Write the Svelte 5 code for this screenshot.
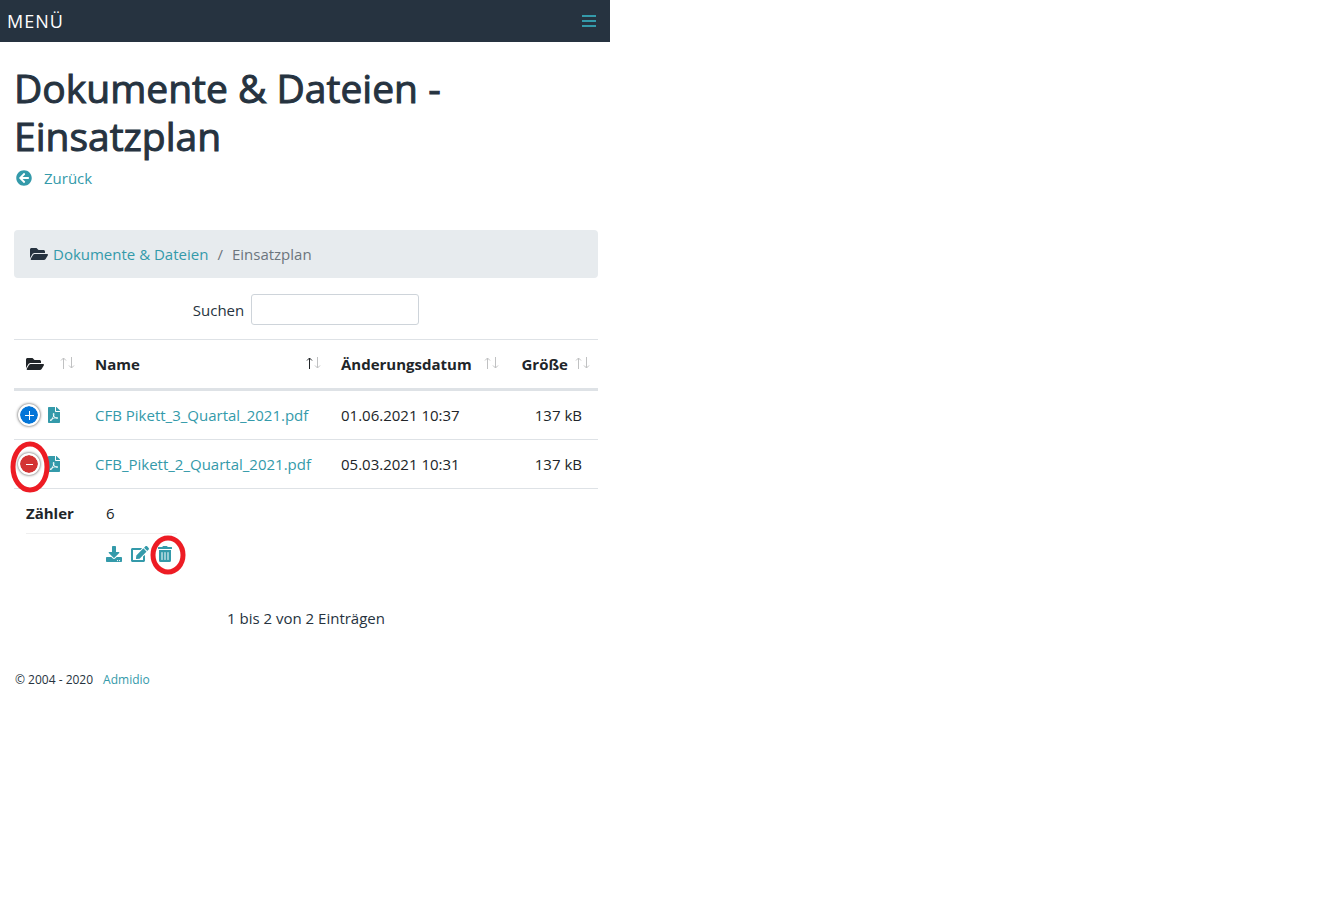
<script lang="ts">
  interface FileEntry {
    name: string;
    date: string;
    size: string;
    counter: number;
    open: boolean;
    marked: boolean;
  }

  type SortKey = 'type' | 'name' | 'date' | 'size';

  let files: FileEntry[] = [
    { name: 'CFB Pikett_3_Quartal_2021.pdf', date: '01.06.2021 10:37', size: '137 kB', counter: 4, open: false, marked: false },
    { name: 'CFB_Pikett_2_Quartal_2021.pdf', date: '05.03.2021 10:31', size: '137 kB', counter: 6, open: true, marked: true },
  ];

  const columns: { key: SortKey; label: string }[] = [
    { key: 'type', label: '' },
    { key: 'name', label: 'Name' },
    { key: 'date', label: 'Änderungsdatum' },
    { key: 'size', label: 'Größe' },
  ];

  let search = '';
  let sortKey: SortKey = 'name';

  $: visible = files.filter((f) => f.name.toLowerCase().includes(search.toLowerCase()));

  function toggle(file: FileEntry) {
    file.open = !file.open;
    files = files;
  }
</script>

{#snippet folderIcon()}
  <svg class="icon folder" viewBox="0 0 576 512" aria-hidden="true">
    <path d="M572.694 292.093L500.27 416.248A63.997 63.997 0 0 1 444.989 448H45.025c-18.523 0-30.064-20.093-20.731-36.093l72.424-124.155A64 64 0 0 1 152 256h399.964c18.523 0 30.064 20.093 20.73 36.093zM152 224h328v-48c0-26.51-21.49-48-48-48H272l-64-64H48C21.49 64 0 85.49 0 112v278.046l69.077-118.418C86.214 242.25 117.989 224 152 224z" />
  </svg>
{/snippet}

<div class="page">
  <header class="topbar">
    <span class="menu-title">MENÜ</span>
    <button class="menu-button" aria-label="Menü öffnen">
      <svg width="14" height="12" viewBox="0 0 14 12" aria-hidden="true">
        <path d="M0 0h14v2H0zM0 5h14v2H0zM0 10h14v2H0z" />
      </svg>
    </button>
  </header>

  <main>
    <h1>Dokumente &amp; Dateien - Einsatzplan</h1>
    <a class="back" href="#back">
      <svg class="icon" viewBox="0 0 512 512" aria-hidden="true">
        <path d="M256 504C119 504 8 393 8 256S119 8 256 8s248 111 248 248-111 248-248 248zm28.9-143.6L209.4 288H392c13.3 0 24-10.7 24-24v-16c0-13.3-10.7-24-24-24H209.4l75.5-72.4c9.7-9.3 9.9-24.8.4-34.3l-11-10.9c-9.4-9.4-24.6-9.4-33.9 0L107.7 239c-9.4 9.4-9.4 24.6 0 33.9l132.7 132.7c9.4 9.4 24.6 9.4 33.9 0l11-10.9c9.5-9.5 9.3-25-.4-34.3z" />
      </svg>
      Zurück
    </a>

    <nav class="breadcrumb">
      {@render folderIcon()}
      <a href="#documents">Dokumente &amp; Dateien</a>
      <span class="divider">/</span>
      <span>Einsatzplan</span>
    </nav>

    <div class="filter">
      <label for="search">Suchen</label>
      <input id="search" type="text" bind:value={search} />
    </div>

    <table>
      <colgroup>
        <col class="col-type" />
        <col />
        <col class="col-date" />
        <col class="col-size" />
      </colgroup>
      <thead>
        <tr>
          {#each columns as column}
            <th class={column.key}>
              <button aria-label={column.label || 'Typ'} on:click={() => (sortKey = column.key)}>
                {#if column.label}
                  {column.label}
                {:else}
                  {@render folderIcon()}
                {/if}
                <svg class="sort" class:active={sortKey === column.key} width="15" height="12" viewBox="0 0 15 12" aria-hidden="true">
                  <path class="up" d="M3.5 12V1M1 3.5L3.5 1L6 3.5" />
                  <path d="M11.5 0V11M9 8.5L11.5 11L14 8.5" />
                </svg>
              </button>
            </th>
          {/each}
        </tr>
      </thead>
      <tbody>
        {#each visible as file}
          <tr>
            <td class="type">
              <div class="type-cell">
                <span class="anchor">
                  <button
                    class="toggle"
                    class:open={file.open}
                    aria-label="Details"
                    aria-expanded={file.open}
                    on:click={() => toggle(file)}
                  >
                    <svg width="9" height="9" viewBox="0 0 9 9" aria-hidden="true">
                      <path d={file.open ? 'M1 4.5h7' : 'M0 4.5h9M4.5 0v9'} />
                    </svg>
                  </button>
                  {#if file.marked}
                    <svg class="mark mark-toggle" viewBox="0 0 40 52" aria-hidden="true">
                      <ellipse cx="20" cy="26" rx="17" ry="23" />
                    </svg>
                  {/if}
                </span>
                <svg class="icon pdf" viewBox="0 0 384 512" aria-hidden="true">
                  <path d="M181.9 256.1c-5-16-4.9-46.9-2-46.9 8.4 0 7.6 36.9 2 46.9zm-1.7 47.2c-7.7 20.2-17.3 43.3-28.4 62.7 18.3-7 39-17.2 62.9-21.9-12.7-9.6-24.9-23.4-34.5-40.8zM86.1 428.1c0 .8 13.2-5.4 34.9-40.2-6.7 6.3-29.1 24.5-34.9 40.2zM248 160h136v328c0 13.3-10.7 24-24 24H24c-13.3 0-24-10.7-24-24V24C0 10.7 10.7 0 24 0h200v136c0 13.2 10.8 24 24 24zm-8 171.8c-20-12.2-33.3-29-42.7-53.8 4.5-18.5 11.6-46.6 6.2-64.2-4.7-29.4-42.4-26.5-47.8-6.8-5 18.3-.4 44.1 8.1 77-11.6 27.6-28.7 64.6-40.8 85.8-.1 0-.1.1-.2.1-27.1 13.9-73.6 44.5-54.5 68 5.6 6.9 16 10 21.5 10 17.9 0 35.7-18 61.1-61.8 25.8-8.5 54.1-19.1 79-23.2 21.7 11.8 47.1 19.5 64 19.5 29.2 0 31.2-32 19.7-43.4-13.9-13.6-54.3-9.7-73.6-7.2zM377 105L279 7c-4.5-4.5-10.6-7-17-7h-6v128h128v-6.1c0-6.3-2.5-12.4-7-16.9zm-74.1 255.3c4.1-2.7-2.5-11.9-42.8-9 37.1 15.8 42.8 9 42.8 9z" />
                </svg>
              </div>
            </td>
            <td><a href="#file">{file.name}</a></td>
            <td>{file.date}</td>
            <td class="size">{file.size}</td>
          </tr>
          {#if file.open}
            <tr class="child">
              <td colspan="4">
                <div class="details">
                  <div class="detail">
                    <strong>Zähler</strong>
                    <span>{file.counter}</span>
                  </div>
                  <div class="detail">
                    <span></span>
                    <div class="actions">
                      <button aria-label="Herunterladen">
                        <svg class="icon" viewBox="0 0 512 512" aria-hidden="true">
                          <path d="M216 0h80c13.3 0 24 10.7 24 24v168h87.7c17.8 0 26.7 21.5 14.1 34.1L269.7 378.3c-7.5 7.5-19.8 7.5-27.3 0L90.1 226.1c-12.6-12.6-3.7-34.1 14.1-34.1H192V24c0-13.3 10.7-24 24-24zm296 376v112c0 13.3-10.7 24-24 24H24c-13.3 0-24-10.7-24-24V376c0-13.3 10.7-24 24-24h146.7l49 49c20.1 20.1 52.5 20.1 72.6 0l49-49H488c13.3 0 24 10.7 24 24zm-124 88c0-11-9-20-20-20s-20 9-20 20 9 20 20 20 20-9 20-20zm64 0c0-11-9-20-20-20s-20 9-20 20 9 20 20 20 20-9 20-20z" />
                        </svg>
                      </button>
                      <button aria-label="Bearbeiten">
                        <svg class="icon edit" viewBox="0 0 576 512" aria-hidden="true">
                          <path d="M402.6 83.2l90.2 90.2c3.8 3.8 3.8 10 0 13.8L274.4 405.6l-92.8 10.3c-12.4 1.4-22.9-9.1-21.5-21.5l10.3-92.8L388.8 83.2c3.8-3.8 10-3.8 13.8 0zm162-22.9l-48.8-48.8c-15.2-15.2-39.9-15.2-55.2 0l-35.4 35.4c-3.8 3.8-3.8 10 0 13.8l90.2 90.2c3.8 3.8 10 3.8 13.8 0l35.4-35.4c15.2-15.3 15.2-40 0-55.2zM384 346.2V448H64V128h229.8c3.2 0 6.2-1.3 8.5-3.5l40-40c7.6-7.6 2.2-20.5-8.5-20.5H48C21.5 64 0 85.5 0 112v352c0 26.5 21.5 48 48 48h352c26.5 0 48-21.5 48-48V306.2c0-10.7-12.9-16-20.5-8.5l-40 40c-2.2 2.3-3.5 5.3-3.5 8.5z" />
                        </svg>
                      </button>
                      <span class="anchor">
                        <button aria-label="Löschen">
                          <svg class="icon trash" viewBox="0 0 448 512" aria-hidden="true">
                            <path d="M32 464a48 48 0 0 0 48 48h288a48 48 0 0 0 48-48V128H32zm272-256a16 16 0 0 1 32 0v224a16 16 0 0 1-32 0zm-96 0a16 16 0 0 1 32 0v224a16 16 0 0 1-32 0zm-96 0a16 16 0 0 1 32 0v224a16 16 0 0 1-32 0zM432 32H312l-9.4-18.7A24 24 0 0 0 281.1 0H166.8a23.72 23.72 0 0 0-21.4 13.3L136 32H16A16 16 0 0 0 0 48v32a16 16 0 0 0 16 16h416a16 16 0 0 0 16-16V48a16 16 0 0 0-16-16z" />
                          </svg>
                        </button>
                        {#if file.marked}
                          <svg class="mark mark-trash" viewBox="0 0 36 40" aria-hidden="true">
                            <ellipse cx="18" cy="20" rx="15" ry="17" />
                          </svg>
                        {/if}
                      </span>
                    </div>
                  </div>
                </div>
              </td>
            </tr>
          {/if}
        {/each}
      </tbody>
    </table>

    <p class="info">1 bis {visible.length} von {files.length} Einträgen</p>
  </main>

  <footer>
    <span>© 2004 - 2020</span>
    <a href="#admidio">Admidio</a>
  </footer>
</div>

<style>
  :global(body) {
    background: #fff;
  }

  .page {
    max-width: 610px;
    color: #263340;
    font-family: "Open Sans", "Noto Sans", sans-serif;
    font-size: 15px;
    line-height: 24px;
  }

  .page * {
    box-sizing: border-box;
  }

  a {
    color: #349aaa;
    text-decoration: none;
  }

  button {
    display: flex;
    padding: 0;
    border: 0;
    background: none;
    color: inherit;
    font: inherit;
    cursor: pointer;
  }

  .icon {
    display: block;
    flex: none;
    width: 16px;
    height: 16px;
    fill: currentColor;
  }

  .icon.folder,
  .icon.edit {
    width: 18px;
  }

  .icon.pdf {
    width: 12px;
    color: #349aaa;
  }

  .icon.trash {
    width: 14px;
  }

  .topbar {
    display: flex;
    align-items: center;
    justify-content: space-between;
    height: 42px;
    padding: 0 14px 0 7px;
    background: #263340;
  }

  .menu-title {
    color: #fff;
    font-size: 18px;
    letter-spacing: 1px;
  }

  .menu-button {
    fill: #349aaa;
  }

  main {
    padding: 22px 12px 0 14px;
  }

  h1 {
    margin: 0 0 6px;
    font-size: 39px;
    font-weight: 500;
    line-height: 48px;
    -webkit-text-stroke: 1px #263340;
  }

  .back {
    display: flex;
    align-items: center;
    gap: 12px;
    padding-left: 2px;
  }

  .breadcrumb {
    display: flex;
    align-items: center;
    gap: 5px;
    margin: 40px 0 16px;
    padding: 12px 16px;
    border-radius: 4px;
    background: #e7ebee;
    color: #6c757d;
  }

  .breadcrumb .folder {
    color: #263340;
  }

  .breadcrumb .divider {
    padding: 0 4px;
  }

  .filter {
    display: flex;
    align-items: center;
    justify-content: center;
    gap: 7px;
    margin-bottom: 14px;
  }

  .filter input {
    width: 168px;
    height: 31px;
    padding: 4px 8px;
    border: 1px solid #ced4da;
    border-radius: 3px;
    font: inherit;
  }

  table {
    width: 100%;
    border-spacing: 0;
    table-layout: fixed;
    color: #212529;
  }

  .col-type {
    width: 69px;
  }

  .col-date {
    width: 178px;
  }

  .col-size {
    width: 91px;
  }

  th {
    padding: 12px 8px 12px 12px;
    border-top: 1px solid #dee2e6;
    border-bottom: 3px solid #dee2e6;
  }

  th button {
    align-items: center;
    justify-content: space-between;
    width: 100%;
    font-weight: 700;
  }

  th.size button {
    justify-content: flex-end;
    gap: 7px;
  }

  .sort {
    flex: none;
    margin-bottom: 3px;
    fill: none;
    stroke: #c0c1c2;
  }

  .sort.active .up {
    stroke: #212529;
  }

  td {
    padding: 12px;
    border-bottom: 1px solid #dee2e6;
    white-space: nowrap;
  }

  td.type {
    padding-left: 4px;
  }

  td.size {
    padding-right: 16px;
    text-align: right;
  }

  .type-cell {
    display: flex;
    align-items: center;
    gap: 8px;
    height: 24px;
  }

  .anchor {
    position: relative;
  }

  .toggle {
    align-items: center;
    justify-content: center;
    width: 22px;
    height: 22px;
    border: 2px solid #fff;
    border-radius: 50%;
    background: #0275d8;
    background-clip: padding-box;
    box-shadow: 0 0 3px #444;
  }

  .toggle.open {
    background-color: #d33333;
  }

  .toggle path {
    stroke: #fff;
  }

  .mark {
    position: absolute;
    fill: none;
    stroke: #ed1c24;
    stroke-width: 5;
    pointer-events: none;
  }

  .mark-toggle {
    top: -12px;
    left: -8px;
    width: 40px;
    height: 52px;
  }

  .mark-trash {
    top: -11px;
    left: -8px;
    width: 36px;
    height: 40px;
  }

  .child td {
    border-bottom: 0;
  }

  .details {
    display: inline-block;
  }

  .detail {
    display: grid;
    grid-template-columns: 80px 71px;
    padding-bottom: 8px;
  }

  .detail + .detail {
    padding: 8px 0 0;
    border-top: 1px solid #efefef;
  }

  .actions {
    display: flex;
    align-items: center;
    gap: 9px;
    height: 24px;
    color: #349aaa;
  }

  .info {
    margin: 22px 0 0;
    text-align: center;
  }

  footer {
    display: flex;
    gap: 10px;
    padding: 38px 15px;
    font-size: 12px;
  }
</style>
